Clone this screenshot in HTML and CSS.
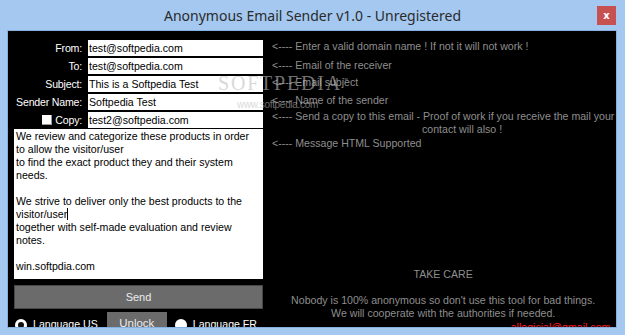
FILE: index.html
```html
<!DOCTYPE html>
<html lang="en">
<head>
    <meta charset="UTF-8">
    <title>Anonymous Email Sender v1.0 - Unregistered</title>
    <link rel="stylesheet" href="styles.css">
</head>
<body>
    <div class="window">
        <div class="titlebar">
            <span class="title">Anonymous Email Sender v1.0 - Unregistered</span>
            <button class="close">x</button>
        </div>

        <div class="client">
            <div class="left">
                <div class="fields">
                    <label class="label">From:</label>
                    <div class="field">test@softpedia.com</div>
                    <label class="label">To:</label>
                    <div class="field">test@softpedia.com</div>
                    <label class="label">Subject:</label>
                    <div class="field">This is a Softpedia Test</div>
                    <label class="label">Sender Name:</label>
                    <div class="field">Softpedia Test</div>
                    <label class="label"><span class="checkbox"></span>Copy:</label>
                    <div class="field">test2@softpedia.com</div>
                </div>

                <div class="message">
                    We review and categorize these products in order<br>
                    to allow the visitor/user<br>
                    to find the exact product they and their system<br>
                    needs.<br>
                    <br>
                    We strive to deliver only the best products to the<br>
                    visitor/user<span class="caret"></span><br>
                    together with self-made evaluation and review<br>
                    notes.<br>
                    <br>
                    win.softpdia.com
                </div>

                <button class="btn send">Send</button>

                <div class="lang-row">
                    <label class="radio"><span class="dot checked"></span>Language US</label>
                    <button class="btn unlock">Unlock</button>
                    <label class="radio"><span class="dot"></span>Language FR</label>
                </div>
            </div>

            <div class="right">
                <div class="hint">&lt;---- Enter a valid domain name ! If not it will not work !</div>
                <div class="hint h2">&lt;---- Email of the receiver</div>
                <div class="hint h3">&lt;---- Email subject</div>
                <div class="hint h4">&lt;---- Name of the sender</div>
                <div class="hint h5">&lt;---- Send a copy to this email - Proof of work if you receive the mail your<span class="more">contact will also !</span></div>
                <div class="hint h6">&lt;---- Message HTML Supported</div>

                <div class="notice">
                    <div class="take-care">TAKE CARE</div>
                    <div class="warning">Nobody is 100% anonymous so don't use this tool for bad things.<br>We will cooperate with the authorities if needed.</div>
                    <div class="contact">allogicial@gmail.com</div>
                </div>
            </div>

            <!-- marca de agua de la captura -->
            <div class="watermark">
                <span class="wm-logo">SOFTPEDIA<sup>™</sup></span>
                <span class="wm-url">www.softpedia.com</span>
            </div>
        </div>
    </div>
</body>
</html>
```
FILE: styles.css
```css
:root {
    --frame: #a4c8f0;
    --frame-line: #86b0df;
    --hint: #8e8e8e;
    --btn: #6b6b6b;
}
body {
    margin: 0;
    padding: 0;
    font-family: 'Liberation Sans', Arial, sans-serif;
}
.window {
    width: 625px;
    height: 335px;
    background-color: var(--frame);
    overflow: hidden;
}
.titlebar {
    height: 30px;
    display: grid;
    grid-template-columns: 1fr auto 1fr;
    align-items: center;
}
.title {
    grid-column: 2;
    font-family: 'Noto Sans', sans-serif;
    font-size: 14px;
    color: #2b2b2b;
    padding-top: 1px;
}
.close {
    grid-column: 3;
    justify-self: end;
    margin-right: 9px;
    margin-top: 1px;
    width: 19px;
    height: 19px;
    padding: 0;
    border: none;
    background-color: #c75050;
    color: white;
    font-family: 'DejaVu Sans', sans-serif;
    font-weight: bold;
    font-size: 10px;
    line-height: 17px;
}
.client {
    position: relative;
    height: 287px;
    margin: 0 8px 0 7px;
    padding: 9px 0 0 6px;
    border: 1px solid var(--frame-line);
    background-color: #000;
    display: flex;
    gap: 9px;
    overflow: hidden;
    font-size: 10.6px;
    line-height: 13px;
}
.left {
    width: 249px;
    flex: none;
    display: flex;
    flex-direction: column;
}
.left > *, .right > * {
    flex: none;
}
.fields {
    display: grid;
    grid-template-columns: 68px 175px;
    column-gap: 6px;
    row-gap: 2px;
}
.label {
    display: flex;
    justify-content: flex-end;
    align-items: center;
    height: 16px;
    color: white;
    white-space: nowrap;
    letter-spacing: -0.2px;
}
.checkbox {
    width: 9px;
    height: 9px;
    margin-right: 3px;
    background: white;
    border-right: 1px solid #9a9a9a;
    border-bottom: 1px solid #9a9a9a;
}
.field {
    height: 16px;
    line-height: 16px;
    padding-left: 1px;
    background: white;
    color: #000;
    white-space: nowrap;
}
.message {
    height: 149px;
    margin-top: 1px;
    padding: 1px 2px 0;
    background: white;
    color: #000;
    white-space: nowrap;
}
.caret {
    display: inline-block;
    width: 1px;
    height: 12px;
    background: #000;
    vertical-align: -2px;
}
.btn {
    font-family: 'Liberation Sans', Arial, sans-serif;
    font-size: 11px;
    background-color: var(--btn);
    color: #ececec;
    border: 1px solid #474747;
    padding: 0;
}
.send {
    margin-top: 6px;
    height: 24px;
}
.lang-row {
    margin-top: 3px;
    display: flex;
    align-items: flex-start;
}
.radio {
    display: flex;
    align-items: center;
    gap: 6px;
    margin-top: 6px;
    color: white;
}
.radio:first-child {
    margin-left: 1px;
}
.dot {
    width: 12px;
    height: 12px;
    box-sizing: border-box;
    border-radius: 50%;
    background: white;
}
.dot.checked {
    background: #111;
    border: 3px solid white;
}
.unlock {
    width: 60px;
    height: 21px;
    margin: 0 8px 0 9px;
    border-color: var(--btn);
    font-size: 11.5px;
}
.right {
    flex: 1;
    padding-right: 4px;
    display: flex;
    flex-direction: column;
    color: var(--hint);
    white-space: nowrap;
}
.h2 { margin-top: 6px; }
.h3 { margin-top: 4px; }
.h4 { margin-top: 5px; }
.h5 { margin-top: 3px; }
.h6 { margin-top: 1px; }
.more {
    display: block;
    padding-left: 150px;
}
.notice {
    margin-top: 118px;
    text-align: center;
}
.warning {
    margin-top: 13px;
}
.contact {
    margin-top: 1px;
    text-align: right;
    padding-right: 4px;
    color: #ff1a1a;
}
.watermark {
    position: absolute;
    left: 210px;
    top: 39px;
    pointer-events: none;
    color: rgba(190, 190, 190, 0.6);
}
.wm-logo {
    display: block;
    font-family: 'Liberation Serif', serif;
    font-size: 20px;
    line-height: 20px;
    letter-spacing: 1.8px;
}
.wm-logo sup {
    font-family: 'Liberation Sans', sans-serif;
    font-size: 6px;
    letter-spacing: 0;
}
.wm-url {
    display: block;
    margin: 6px 0 0 19px;
    font-size: 10px;
    line-height: 12px;
    letter-spacing: -0.3px;
}
```
